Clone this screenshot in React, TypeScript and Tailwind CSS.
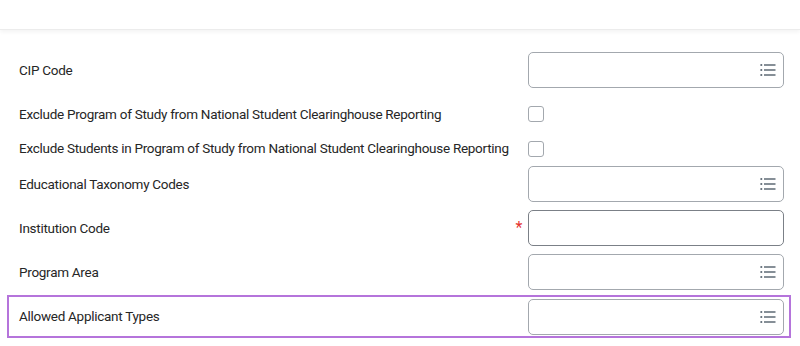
// App.tsx
const font = { fontFamily: "Roboto, 'Liberation Sans', sans-serif" };

function ListIcon() {
  return (
    <svg width="16" height="14" viewBox="0 0 16 14" fill="none">
      <circle cx="1.3" cy="2" r="1.1" fill="#5f6b76" />
      <circle cx="1.3" cy="7" r="1.1" fill="#5f6b76" />
      <circle cx="1.3" cy="12" r="1.1" fill="#5f6b76" />
      <path d="M4 2h11.5M4 7h11.5M4 12h11.5" stroke="#5f6b76" strokeWidth="1.6" />
    </svg>
  );
}

function Prompt({ strong }: { strong?: boolean }) {
  return (
    <div
      className={
        "w-[256px] h-[36px] bg-white rounded-[5px] border flex items-center justify-end pr-[7px] " +
        (strong ? "border-[#7b8087]" : "border-[#a3a8ae]")
      }
    >
      {!strong && <ListIcon />}
    </div>
  );
}

function Checkbox() {
  return <div className="w-[16px] h-[16px] border border-[#a3a8ae] rounded-[3px] bg-white" />;
}

export default function App() {
  return (
    <div className="w-[800px] h-[346px] bg-white overflow-hidden text-[#262626]" style={font}>
      {/* header strip */}
      <div className="h-[30px] border-b border-[#ececec] shadow-[0_2px_4px_rgba(0,0,0,0.05)]" />

      <div className="pt-[18px] text-[13.5px] tracking-[-0.28px] font-normal">
        {/* CIP Code */}
        <div className="h-[44px] flex items-center pl-[19px] pr-[16px]">
          <span className="flex-1">CIP Code</span>
          <Prompt />
        </div>

        {/* checkboxes */}
        <div className="h-[43px] flex items-center pl-[19px] pr-[16px] pt-[1px]">
          <span className="flex-1">Exclude Program of Study from National Student Clearinghouse Reporting</span>
          <div className="w-[256px]">
            <Checkbox />
          </div>
        </div>
        <div className="h-[27px] flex items-center pl-[19px] pr-[16px]">
          <span className="flex-1">Exclude Students in Program of Study from National Student Clearinghouse Reporting</span>
          <div className="w-[256px]">
            <Checkbox />
          </div>
        </div>

        <div className="h-[44px] flex items-center pl-[19px] pr-[16px]">
          <span className="flex-1">Educational Taxonomy Codes</span>
          <Prompt />
        </div>

        <div className="h-[44px] flex items-center pl-[19px] pr-[16px]">
          <span className="flex-1">Institution Code</span>
          <span className="text-[#e5332f] text-[16px] mr-[6px] leading-none">*</span>
          <Prompt strong />
        </div>

        <div className="h-[44px] flex items-center pl-[19px] pr-[16px]">
          <span className="flex-1">Program Area</span>
          <Prompt />
        </div>

        {/* highlighted row */}
        <div className="mt-[1px] mx-[7px] mr-[9px] h-[43px] border-2 border-[#b574db] flex items-center pl-[10px] pr-[5px]">
          <span className="flex-1">Allowed Applicant Types</span>
          <Prompt />
        </div>
      </div>
    </div>
  );
}
